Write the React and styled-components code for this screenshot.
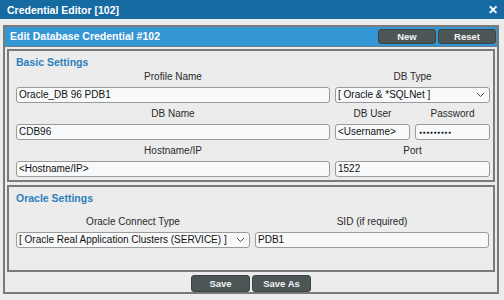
import React from "react";
import styled, { createGlobalStyle } from "styled-components";

const GlobalStyle = createGlobalStyle`
  html, body {
    margin: 0;
    padding: 0;
    background: #ececec;
    font-family: "Liberation Sans", Arial, sans-serif;
  }
  * { box-sizing: border-box; }
`;

const Window = styled.div`
  width: 504px;
  height: 300px;
  background: #ececec;
  display: flex;
  flex-direction: column;
`;

const TitleBar = styled.div`
  height: 19px;
  background: #166aa2;
  color: #fff;
  font-size: 10.5px;
  font-weight: bold;
  display: flex;
  align-items: center;
  justify-content: space-between;
  padding: 0 6px 0 7px;
`;

const Close = styled.span`
  font-size: 12px;
  font-weight: bold;
  line-height: 1;
`;

const Panel = styled.div`
  margin: 6px 5px 0 3px;
  border: 2px solid #7a7a7a;
  display: flex;
  flex-direction: column;
  height: 269px;
`;

const Header = styled.div`
  height: 20px;
  background: #3596d6;
  border-bottom: 1px solid #6f7f88;
  display: flex;
  align-items: center;
  justify-content: space-between;
  padding: 0 1px 0 5px;
  color: #fff;
  font-size: 10.5px;
  font-weight: bold;
`;

const ButtonGroup = styled.div`
  display: flex;
  gap: 2px;
  justify-content: ${({ center }) => (center ? "center" : "flex-end")};
  margin: ${({ center }) => (center ? "3px 0 0" : "0")};
`;

const Button = styled.button`
  width: ${({ w }) => w || 58}px;
  height: ${({ h }) => h || 15}px;
  background: #4c5657;
  color: #f4f4f4;
  border: 1px solid #3b4445;
  border-radius: 3px;
  font-family: "Liberation Sans", Arial, sans-serif;
  font-size: 9.5px;
  font-weight: bold;
  padding: 0;
`;

const Fieldset = styled.div`
  margin: ${({ top }) => top}px 2px 0 2px;
  border: 2px solid #7a7a7a;
  height: ${({ h }) => h}px;
  padding: 5px 5px 0 7px;
  display: flex;
  flex-direction: column;
`;

const Legend = styled.div`
  color: #2b7fbd;
  font-size: 10.5px;
  font-weight: bold;
  height: 13px;
  margin-bottom: ${({ gap }) => gap}px;
`;

const Grid = styled.div`
  display: grid;
  grid-template-columns: ${({ cols }) => cols};
  column-gap: 5px;
  row-gap: 3px;
`;

const Field = styled.div`
  display: flex;
  flex-direction: column;
  grid-column: ${({ span }) => span || "auto"};
`;

const Label = styled.div`
  text-align: center;
  font-size: 10px;
  color: #2a2a2a;
  height: 13px;
  line-height: 13px;
  margin-top: 1px;
  margin-bottom: 4px;
`;

const Input = styled.div`
  height: 16px;
  background: #f7f9fa;
  border: 1px solid #9a9a9a;
  border-radius: 3px;
  font-size: 10px;
  color: #111;
  display: flex;
  align-items: center;
  justify-content: space-between;
  padding: 0 4px 0 2px;
  white-space: nowrap;
  overflow: hidden;
`;

const Dots = styled.span`
  font-size: 5px;
  letter-spacing: 0.6px;
  padding-left: 1px;
`;

const Chevron = () => (
  <svg width="9" height="6" viewBox="0 0 9 6">
    <path d="M1 1 L4.5 4.5 L8 1" fill="none" stroke="#444" strokeWidth="1" />
  </svg>
);

const TextField = ({ label, value, select, span, secret }) => (
  <Field span={span}>
    <Label>{label}</Label>
    <Input>
      {secret ? <Dots>●●●●●●●●●</Dots> : <span>{value}</span>}
      {select && <Chevron />}
    </Input>
  </Field>
);

export default function App() {
  return (
    <Window>
      <GlobalStyle />
      <TitleBar>
        <span>Credential Editor [102]</span>
        <Close>✕</Close>
      </TitleBar>
      <Panel>
        <Header>
          <span>Edit Database Credential #102</span>
          <ButtonGroup>
            <Button>New</Button>
            <Button>Reset</Button>
          </ButtonGroup>
        </Header>
        <Fieldset top={2} h={134}>
          <Legend gap={0}>Basic Settings</Legend>
          <Grid cols="314px 75px 75px">
            <TextField label="Profile Name" value="Oracle_DB 96 PDB1" />
            <TextField label="DB Type" value="[ Oracle & *SQLNet ]" select span="span 2" />
            <TextField label="DB Name" value="CDB96" />
            <TextField label="DB User" value="<Username>" />
            <TextField label="Password" secret />
            <TextField label="Hostname/IP" value="<Hostname/IP>" />
            <TextField label="Port" value="1522" span="span 2" />
          </Grid>
        </Fieldset>
        <Fieldset top={3} h={88}>
          <Legend gap={9}>Oracle Settings</Legend>
          <Grid cols="234px 234px">
            <TextField label="Oracle Connect Type" value="[ Oracle Real Application Clusters (SERVICE) ]" select />
            <TextField label="SID (if required)" value="PDB1" />
          </Grid>
        </Fieldset>
        <ButtonGroup center>
          <Button w={59} h={17}>Save</Button>
          <Button w={59} h={17}>Save As</Button>
        </ButtonGroup>
      </Panel>
    </Window>
  );
}
